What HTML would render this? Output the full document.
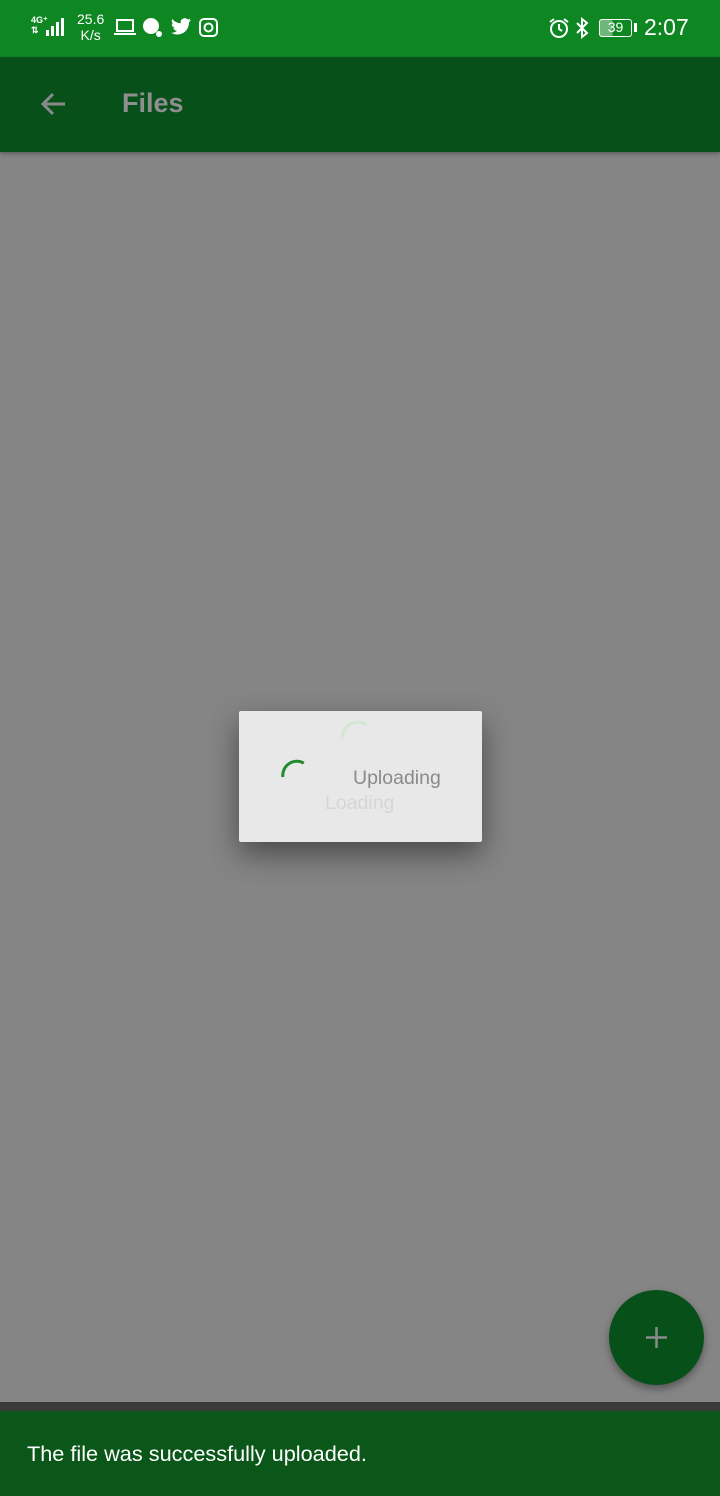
<!DOCTYPE html>
<html><head><meta charset="utf-8"><style>
body{margin:0;width:720px;height:1496px;position:relative;overflow:hidden;background:#858585;font-family:"Liberation Sans",sans-serif}
.sb{position:absolute;left:0;top:0;width:720px;height:57px;background:#0e8622;color:#fff}
.ab{position:absolute;left:0;top:57px;width:720px;height:95px;background:#08501a;box-shadow:0 2px 4px rgba(0,0,0,.3)}
.dlg{position:absolute;left:239px;top:711px;width:243px;height:131px;background:#e8e8e8;border-radius:2px;box-shadow:0 12px 30px rgba(0,0,0,.45)}
.fab{position:absolute;left:609px;top:1290px;width:95px;height:95px;border-radius:50%;background:#08501a;box-shadow:0 4px 8px rgba(0,0,0,.35)}
.dark{position:absolute;left:0;top:1402px;width:720px;height:9px;background:#3a3a3a}
.snack{position:absolute;left:0;top:1411px;width:720px;height:85px;background:#0a5719;color:#fff;font-size:21.7px}
</style></head><body>
<div class="sb">
 <div style="position:absolute;left:31px;top:15px;font-size:9px;font-weight:bold;line-height:10px">4G⁺<br>⇅</div>
 <svg style="position:absolute;left:42px;top:16px" width="26" height="22"><rect x="4" y="14" width="3" height="6" fill="#fff"/><rect x="9" y="10" width="3" height="10" fill="#fff"/><rect x="14" y="6" width="3" height="14" fill="#fff"/><rect x="19" y="2" width="3" height="18" fill="#fff"/></svg>
 <div style="position:absolute;left:77px;top:11px;font-size:14px;line-height:16px;text-align:center">25.6<br>K/s</div>
 <svg style="position:absolute;left:114px;top:18px" width="24" height="18"><rect x="3" y="2" width="16" height="11" fill="none" stroke="#fff" stroke-width="2"/><rect x="0" y="15" width="22" height="2" fill="#fff"/></svg>
 <svg style="position:absolute;left:142px;top:17px" width="22" height="22"><circle cx="9" cy="9" r="8" fill="#fff"/><circle cx="17" cy="17" r="3" fill="#fff"/></svg>
 <svg style="position:absolute;left:170px;top:18px" width="22" height="19" viewBox="0 0 24 20"><path d="M23 2c-.8.4-1.7.6-2.6.7.9-.6 1.6-1.4 2-2.5-.9.5-1.9.9-2.9 1.1A4.5 4.5 0 0 0 11.8 5.4 12.8 12.8 0 0 1 2.5.7a4.5 4.5 0 0 0 1.4 6c-.7 0-1.4-.2-2-.6 0 2.200 1.600 4 3.600 4.400-.7.2-1.400.2-2 .1.6 1.800 2.300 3.100 4.200 3.100A9 9 0 0 1 1 15.600 12.800 12.800 0 0 0 7.900 17.600c8.300 0 12.800-6.900 12.800-12.800v-.6c.9-.6 1.600-1.400 2.300-2.200z" fill="#fff"/></svg>
 <svg style="position:absolute;left:199px;top:18px" width="20" height="20"><rect x="1" y="1" width="17" height="17" rx="4" fill="none" stroke="#fff" stroke-width="2"/><circle cx="9.5" cy="9.5" r="4" fill="none" stroke="#fff" stroke-width="2"/></svg>
 <svg style="position:absolute;left:548px;top:17px" width="22" height="22"><circle cx="11" cy="12" r="8" fill="none" stroke="#fff" stroke-width="2"/><path d="M11 7v5l3 2M2 5l4-3M20 5l-4-3" stroke="#fff" stroke-width="2" fill="none"/></svg>
 <svg style="position:absolute;left:575px;top:17px" width="14" height="22"><path d="M2 6l10 10-5 4V2l5 4L2 16" stroke="#fff" stroke-width="2" fill="none"/></svg>
 <div style="position:absolute;left:599px;top:19px;width:33px;height:18px;border:1.5px solid #fff;border-radius:3px;box-sizing:border-box;font-size:14px;line-height:15px;text-align:center;background:linear-gradient(90deg,rgba(255,255,255,.4) 40%,transparent 40%)">39</div>
 <div style="position:absolute;left:634px;top:23px;width:3px;height:9px;background:#fff"></div>
 <div style="position:absolute;left:644px;top:14px;font-size:23px">2:07</div>
</div>
<div class="ab">
 <svg style="position:absolute;left:40px;top:34px" width="28" height="28"><path d="M25 13H5M13 3L3 13l10 10" stroke="#8a8a8a" stroke-width="3" fill="none"/></svg>
 <div style="position:absolute;left:122px;top:31px;font-size:27px;font-weight:bold;color:#8f8f8f">Files</div>
</div>
<div class="dlg">
 <svg style="position:absolute;left:40px;top:40px" width="30" height="30"><path d="M3 24 A14 14 0 0 1 26 14" stroke="#1f8a2e" stroke-width="3" fill="none" transform="rotate(-10 15 20)"/></svg>
 <svg style="position:absolute;left:98px;top:4px" width="40" height="30"><path d="M5 24 A16 16 0 0 1 30 10" stroke="#d5e5d5" stroke-width="3" fill="none"/></svg>
 <div style="position:absolute;left:114px;top:56px;font-size:19.5px;color:#8a8a8a">Uploading</div>
 <div style="position:absolute;left:86px;top:81px;font-size:19.5px;color:#d6d6d6">Loading</div>
</div>
<div class="fab"><svg style="position:absolute;left:35px;top:35px" width="25" height="25"><path d="M12.5 2v21M2 12.5h21" stroke="#8a8a8a" stroke-width="2.5"/></svg></div>
<div class="dark"></div>
<div class="snack"><div style="position:absolute;left:27px;top:30px">The file was successfully uploaded.</div></div>
</body></html>
